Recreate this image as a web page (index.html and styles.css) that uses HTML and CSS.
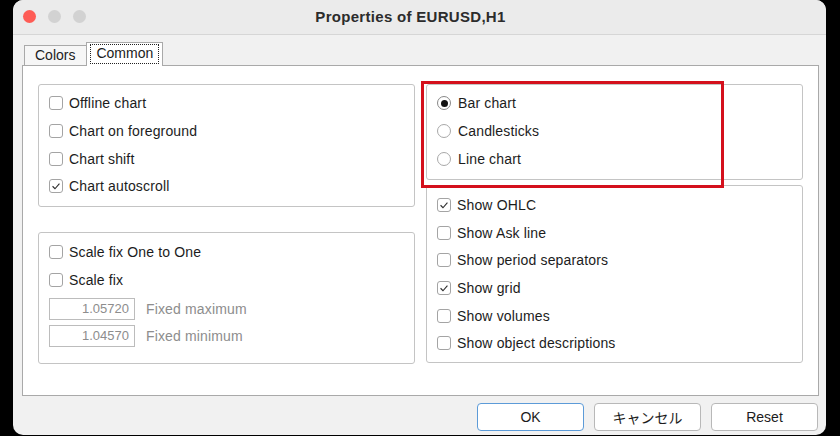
FILE: index.html
```html
<!DOCTYPE html>
<html>
<head>
<meta charset="utf-8">
<link rel="stylesheet" href="styles.css">
</head>
<body>
<div class="window">
  <div class="titlebar">
    <div class="lights">
      <span class="light red"></span>
      <span class="light gray"></span>
      <span class="light gray"></span>
    </div>
    <div class="title">Properties of EURUSD,H1</div>
    <div></div>
  </div>
  <div class="content">
    <div class="tabs">
      <div class="tab">Colors</div>
      <div class="tab active"><span class="focus">Common</span></div>
    </div>
    <div class="panel">
      <div class="col">
        <div class="group g-left1">
          <div class="row"><span class="cb"></span>Offline chart</div>
          <div class="row"><span class="cb"></span>Chart on foreground</div>
          <div class="row"><span class="cb"></span>Chart shift</div>
          <div class="row"><span class="cb checked"><svg viewBox="0 0 14 14"><polyline points="3,7.3 5.8,10.2 11,4.2"/></svg></span>Chart autoscroll</div>
        </div>
        <div class="group g-left2">
          <div class="row"><span class="cb"></span>Scale fix One to One</div>
          <div class="row"><span class="cb"></span>Scale fix</div>
          <div class="field-row first"><span class="field">1.05720</span><span class="dim">Fixed maximum</span></div>
          <div class="field-row"><span class="field">1.04570</span><span class="dim">Fixed minimum</span></div>
        </div>
      </div>
      <div class="col right">
        <div class="group g-right1">
          <div class="row"><span class="radio on"></span>Bar chart</div>
          <div class="row"><span class="radio"></span>Candlesticks</div>
          <div class="row"><span class="radio"></span>Line chart</div>
        </div>
        <div class="group g-right2">
          <div class="row"><span class="cb checked"><svg viewBox="0 0 14 14"><polyline points="3,7.3 5.8,10.2 11,4.2"/></svg></span>Show OHLC</div>
          <div class="row"><span class="cb"></span>Show Ask line</div>
          <div class="row"><span class="cb"></span>Show period separators</div>
          <div class="row"><span class="cb checked"><svg viewBox="0 0 14 14"><polyline points="3,7.3 5.8,10.2 11,4.2"/></svg></span>Show grid</div>
          <div class="row"><span class="cb"></span>Show volumes</div>
          <div class="row"><span class="cb"></span>Show object descriptions</div>
        </div>
        <div class="highlight"></div>
      </div>
    </div>
    <div class="buttons">
      <button class="btn default">OK</button>
      <button class="btn">キャンセル</button>
      <button class="btn">Reset</button>
    </div>
  </div>
</div>
</body>
</html>
```

FILE: styles.css
```css
* { box-sizing: border-box; }
html, body {
  margin: 0;
  padding: 0;
  background: #000;
  width: 840px;
  height: 436px;
  overflow: hidden;
}
body {
  font-family: "Liberation Sans", "Noto Sans CJK JP", sans-serif;
  font-size: 14px;
  color: #1c1c1c;
}
.window {
  margin-left: 13px;
  width: 813px;
  height: 435px;
  background: #f1f1f1;
  border-radius: 10px;
  overflow: hidden;
}
.titlebar {
  height: 35px;
  background: #ebebeb;
  border-bottom: 1px solid #d6d6d6;
  display: grid;
  grid-template-columns: 1fr auto 1fr;
  align-items: center;
}
.lights {
  display: flex;
  gap: 12px;
  padding-left: 10px;
  padding-bottom: 1px;
}
.light {
  width: 13px;
  height: 13px;
  border-radius: 50%;
  display: block;
}
.light.red { background: #fe5c55; }
.light.gray { background: #d2d2d2; }
.title {
  font-weight: bold;
  font-size: 15px;
  color: #2c2c2c;
  padding-bottom: 1px;
  margin-right: 18px;
  letter-spacing: 0.3px;
}
.content {
  padding: 0 7px 0 9px;
}
.tabs {
  display: flex;
  align-items: flex-end;
  height: 31px;
  margin-bottom: -1px;
  padding-left: 2px;
  position: relative;
  z-index: 1;
}
.tab {
  height: 21px;
  padding: 0 11px 0 10px;
  border: 1px solid #a9a9a9;
  border-bottom: 1px solid #a9a9a9;
  background: #f6f6f6;
  display: flex;
  align-items: center;
  line-height: 1;
  padding-bottom: 2px;
}
.tab.active {
  height: 24px;
  background: #fff;
  border-bottom: none;
  margin-left: -1px;
  padding: 1px 3px 0 3px;
  align-items: flex-start;
}
.focus {
  border: 1px dotted #222;
  padding: 1px 5px 3px 5px;
}
.panel {
  height: 331px;
  background: #fff;
  border: 1px solid #a9a9a9;
  display: grid;
  grid-template-columns: 377px 377px;
  column-gap: 11px;
  padding: 18px 16px 0 15px;
  align-items: start;
  letter-spacing: 0.15px;
}
.col {
  display: flex;
  flex-direction: column;
}
.col.right { position: relative; }
.group {
  border: 1px solid #c4c4c4;
  border-radius: 3px;
  background: #fff;
  padding-left: 10px;
}
.g-left1 { height: 123px; padding-top: 4.5px; margin-bottom: 25px; }
.g-left2 { height: 132px; padding-top: 5px; }
.g-right1 { height: 96px; padding-top: 4.5px; margin-bottom: 5px; }
.g-right2 { height: 178px; padding-top: 5px; }
.row {
  height: 27.7px;
  display: flex;
  align-items: center;
  white-space: nowrap;
}
.cb {
  width: 14px;
  height: 14px;
  border: 1px solid #a4a4a4;
  border-radius: 3px;
  margin-right: 6px;
  flex: none;
  display: block;
  background: #fff;
}
.cb svg {
  display: block;
  width: 12px;
  height: 12px;
}
.cb polyline {
  fill: none;
  stroke: #2d2d2d;
  stroke-width: 1.3;
}
.radio {
  width: 14px;
  height: 14px;
  border: 1px solid #a8a8a8;
  border-radius: 50%;
  margin-right: 7px;
  flex: none;
  display: flex;
  align-items: center;
  justify-content: center;
}
.radio.on { border-color: #888; }
.radio.on::after {
  content: "";
  width: 7px;
  height: 7px;
  border-radius: 50%;
  background: #111;
}
.field-row {
  height: 27px;
  display: flex;
  align-items: center;
}
.field-row.first { margin-top: 2.5px; }
.field {
  width: 86px;
  height: 22px;
  border: 1px solid #bcbcbc;
  color: #8d8d8d;
  font-size: 13px;
  text-align: right;
  padding-right: 5px;
  line-height: 20px;
  margin-right: 11px;
  letter-spacing: 0;
}
.dim { color: #8d8d8d; font-size: 14px; }
.highlight {
  position: absolute;
  left: -5px;
  top: -3px;
  width: 303px;
  height: 107px;
  border: 3px solid #d4101c;
}
.buttons {
  display: flex;
  justify-content: flex-end;
  gap: 10px;
  margin-top: 7px;
  padding-right: 1px;
}
.btn {
  width: 107px;
  height: 28px;
  border: 1px solid #b8b8b8;
  border-radius: 4px;
  background: #fff;
  font-family: "Liberation Sans", "Noto Sans CJK JP", sans-serif;
  font-size: 14px;
  color: #1c1c1c;
  padding: 0;
}
.btn.default { border-color: #5c9bd8; }
```
